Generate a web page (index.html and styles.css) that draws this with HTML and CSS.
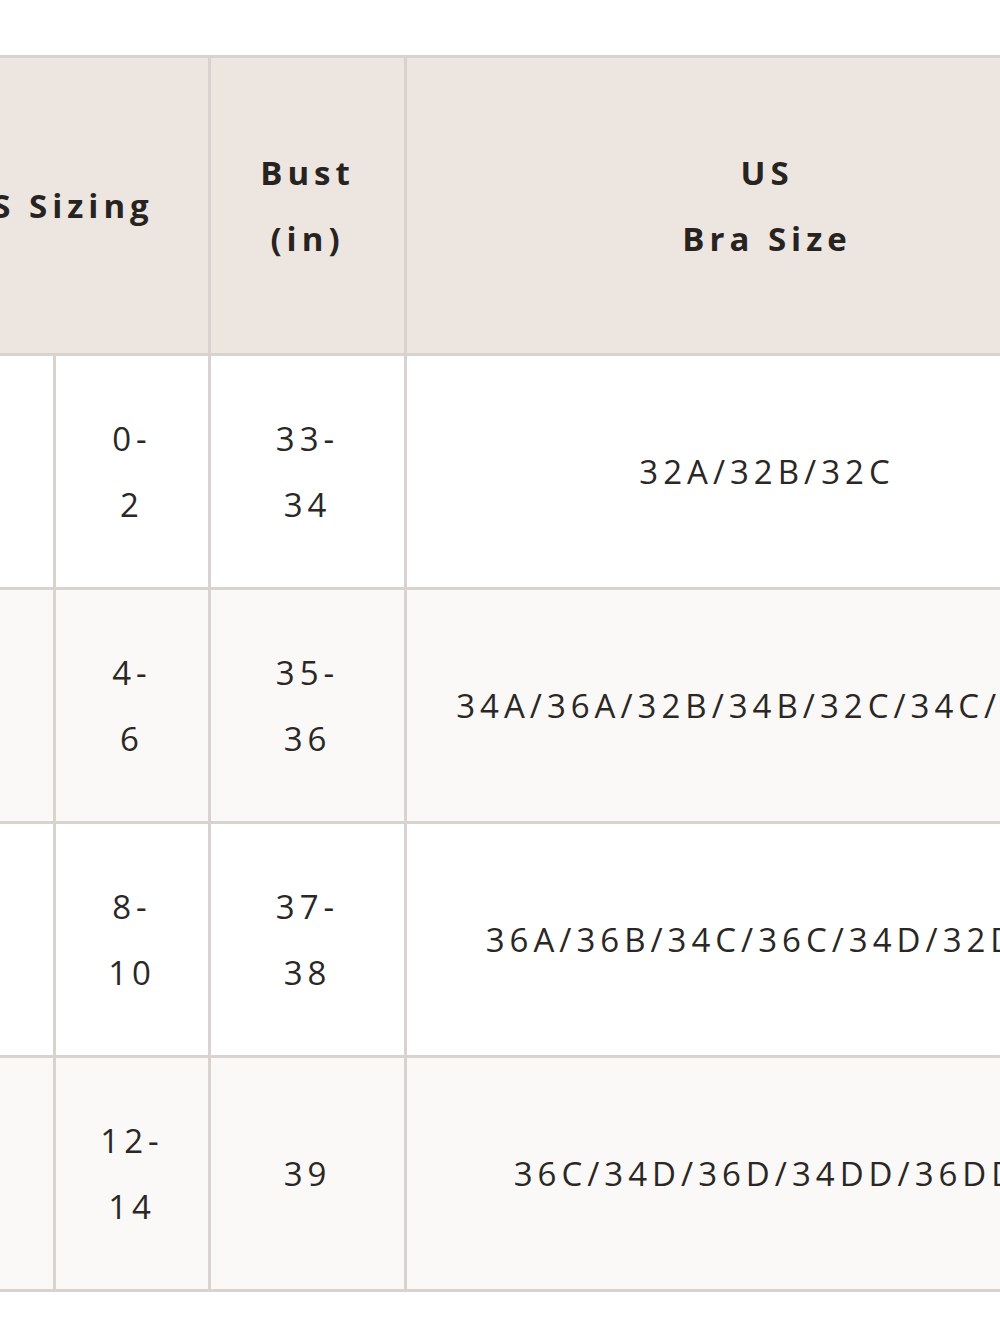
FILE: index.html
```html
<!DOCTYPE html>
<html>
<head>
<meta charset="utf-8">
<link rel="stylesheet" href="styles.css">
</head>
<body>
<div class="viewport">
  <table class="size-table">
    <colgroup>
      <col class="c1">
      <col class="c2">
      <col class="c3">
      <col class="c4">
    </colgroup>
    <thead>
      <tr>
        <th colspan="2">US Sizing</th>
        <th>Bust<br>(in)</th>
        <th>US<br>Bra Size</th>
      </tr>
    </thead>
    <tbody>
      <tr>
        <td>XS</td>
        <td>0-<br>2</td>
        <td>33-<br>34</td>
        <td>32A/32B/32C</td>
      </tr>
      <tr class="alt">
        <td>S</td>
        <td>4-<br>6</td>
        <td>35-<br>36</td>
        <td>34A/36A/32B/34B/32C/34C/32D</td>
      </tr>
      <tr>
        <td>M</td>
        <td>8-<br>10</td>
        <td>37-<br>38</td>
        <td>36A/36B/34C/36C/34D/32DD</td>
      </tr>
      <tr class="alt">
        <td>L</td>
        <td>12-<br>14</td>
        <td>39</td>
        <td>36C/34D/36D/34DD/36DD</td>
      </tr>
    </tbody>
  </table>
</div>
</body>
</html>
```

FILE: styles.css
```css
html, body {
  margin: 0;
  padding: 0;
  background: #ffffff;
}

.viewport {
  width: 1000px;
  height: 1333px;
  overflow: hidden;
  padding-top: 55px;
  box-sizing: border-box;
}

.size-table {
  margin-left: -95px;
  border-collapse: collapse;
  table-layout: fixed;
  width: 1222px;
  font-family: "Open Sans", "Liberation Sans", sans-serif;
  color: #2a2725;
}

.c1 { width: 148px; }
.c2 { width: 155px; }
.c3 { width: 196px; }
.c4 { width: 723px; }

.size-table th,
.size-table td {
  border: 3px solid #d9d3d0;
  text-align: center;
  vertical-align: middle;
  padding: 0;
  white-space: nowrap;
  overflow: hidden;
}

.size-table th {
  background: #ede6e0;
  height: 295px;
  font-weight: 700;
  font-size: 33px;
  line-height: 66px;
  letter-spacing: 5px;
  color: #262321;
}

.size-table td {
  height: 231px;
  font-size: 33px;
  line-height: 66px;
  letter-spacing: 5px;
  font-weight: 400;
}

.size-table tr.alt td {
  background: #faf9f7;
}

.size-table td:first-child {
  color: transparent;
}
```
